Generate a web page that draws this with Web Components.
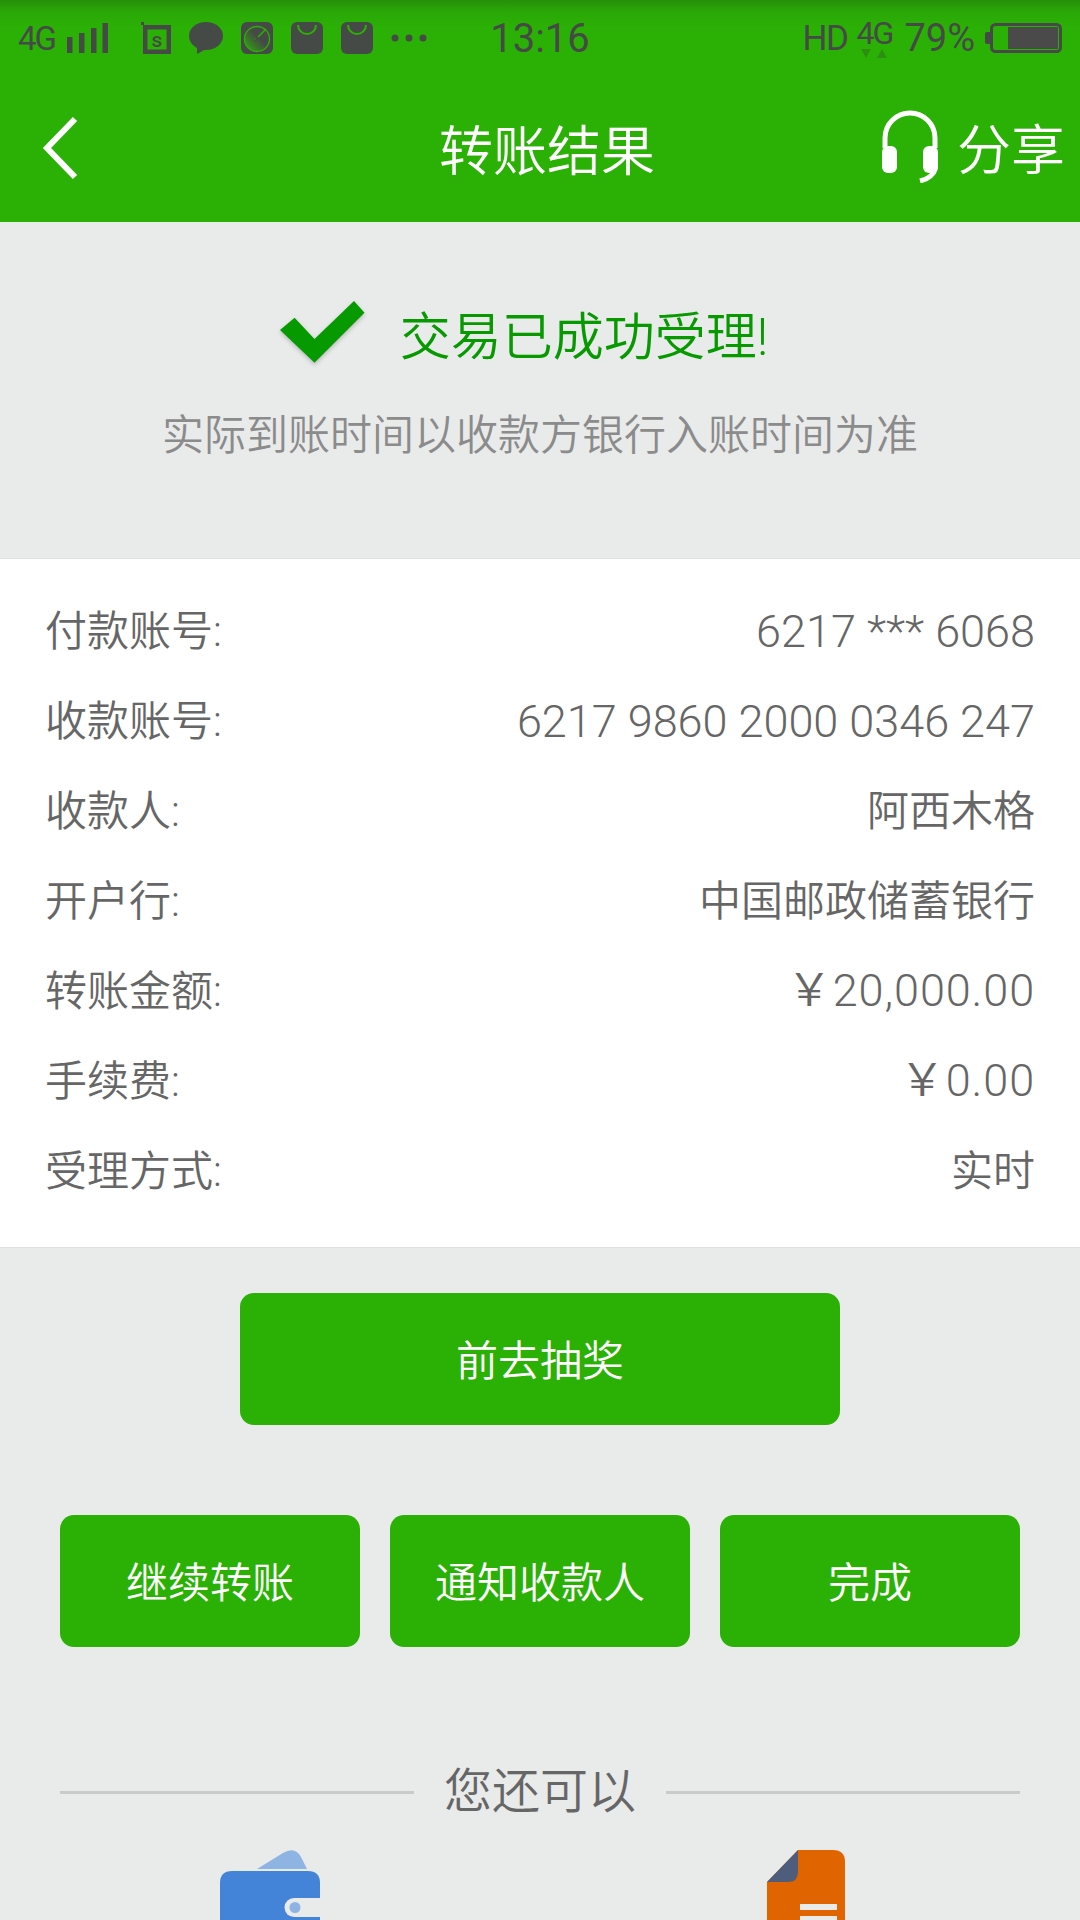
<!DOCTYPE html>
<html lang="zh-CN"><head><meta charset="utf-8"><title>转账结果</title>
<style>
html,body{margin:0;padding:0;background:#e9eaea}
body{font-family:Roboto,"Noto Sans CJK SC",sans-serif;font-weight:350}
pay-app{height:1920px;overflow:hidden}
</style></head><body>
<pay-app>
  <status-bar></status-bar>
  <nav-bar title="转账结果"></nav-bar>
  <result-head heading="交易已成功受理!" note="实际到账时间以收款方银行入账时间为准"></result-head>
  <detail-list>
    <detail-row label="付款账号:" value="6217 *** 6068" kind="num"></detail-row>
    <detail-row label="收款账号:" value="6217 9860 2000 0346 247" kind="num"></detail-row>
    <detail-row label="收款人:" value="阿西木格"></detail-row>
    <detail-row label="开户行:" value="中国邮政储蓄银行"></detail-row>
    <detail-row label="转账金额:" value="￥20,000.00" kind="money"></detail-row>
    <detail-row label="手续费:" value="￥0.00" kind="money"></detail-row>
    <detail-row label="受理方式:" value="实时"></detail-row>
  </detail-list>
  <action-area>
    <green-button style="width:600px">前去抽奖</green-button>
    <div slot="row"><green-button>继续转账</green-button></div>
    <div slot="row"><green-button>通知收款人</green-button></div>
    <div slot="row"><green-button>完成</green-button></div>
  </action-area>
  <more-section></more-section>
</pay-app>
<script>
const def=(name,html,init)=>customElements.define(name,class extends HTMLElement{
  constructor(){super();this.attachShadow({mode:'open'}).innerHTML=html;}
  connectedCallback(){if(init)init(this,this.shadowRoot);}
});
def('pay-app',`<style>:host{display:block;width:1080px;background:#e9eaea;color:#666}</style><slot></slot>`);
def('status-bar',`<style>
:host{display:grid;grid-template-columns:1fr auto 1fr;align-items:center;height:75px;box-sizing:border-box;color:#464a46;
background:linear-gradient(#268f08 0,#2aa807 12px,#2bb105 30px);font-family:Roboto,sans-serif;font-weight:400}
.l,.r{display:flex;align-items:center;height:75px}
.l{padding-left:18px}.r{justify-content:flex-end;padding-right:18px}
svg{display:block;flex:none}
.t{font-size:40px;font-weight:400;line-height:75px;color:#454a45;padding-top:1px;box-sizing:border-box}
.g{font-size:33px;letter-spacing:-2px;line-height:1}
</style>
<div class="l">
<span class="g">4G</span>
<svg style="margin-left:12px" width="41" height="32" viewBox="0 0 41 32" fill="#464a46"><rect x="0" y="15" width="5.5" height="16"/><rect x="12" y="11" width="5.5" height="20"/><rect x="24" y="6" width="5.5" height="25"/><rect x="35.5" y="1" width="5.5" height="30"/></svg>
<svg style="margin-left:33px" width="30" height="33" viewBox="0 0 30 33"><path d="M0 0h3v3h27v29H2V3H0z" fill="#464a46"/><rect x="6.5" y="7.5" width="19" height="20" fill="#2bb105"/><text x="16" y="25" font-family="Roboto" font-size="21" font-weight="500" text-anchor="middle" fill="#464a46">s</text></svg>
<svg style="margin-left:18px" width="34" height="32" viewBox="0 0 34 32"><ellipse cx="17" cy="14" rx="17" ry="14" fill="#464a46"/><path d="M8 25l0 7 9-5z" fill="#464a46"/></svg>
<svg style="margin-left:18px" width="32" height="32" viewBox="0 0 32 32"><defs><linearGradient id="g" x1="0" y1="1" x2="1" y2="0"><stop offset="0" stop-color="#2bb105"/><stop offset=".55" stop-color="#2bb105" stop-opacity="0"/></linearGradient></defs><rect width="32" height="32" rx="6" fill="#464a46"/><circle cx="16" cy="17" r="12.5" fill="url(#g)" stroke="#2bb105" stroke-width="1.3"/><path d="M14 18L25 7" stroke="#2bb105" stroke-width="1.4"/><path d="M13 20l3-6 2 2z" fill="#464a46"/></svg>
<svg style="margin-left:18px" width="32" height="32" viewBox="0 0 32 32"><rect width="32" height="32" rx="6" fill="#464a46"/><path d="M7 3a9 9 0 0 0 18 0" fill="none" stroke="#2bb105" stroke-width="2"/></svg>
<svg style="margin-left:18px" width="32" height="32" viewBox="0 0 32 32"><rect width="32" height="32" rx="6" fill="#464a46"/><path d="M7 3a9 9 0 0 0 18 0" fill="none" stroke="#2bb105" stroke-width="2"/></svg>
<svg style="margin-left:18px" width="36" height="8" viewBox="0 0 36 8" fill="#464a46"><circle cx="4" cy="4" r="3.5"/><circle cx="18" cy="4" r="3.5"/><circle cx="32" cy="4" r="3.5"/></svg>
</div>
<div class="t">13:16</div>
<div class="r">
<span style="font-size:35px;letter-spacing:-1.5px;line-height:1;margin-right:8px">HD</span>
<span style="display:flex;flex-direction:column;align-items:center;width:38px;margin-right:11px;margin-top:-1px">
  <span class="g" style="font-size:32px">4G</span>
  <svg width="26" height="9" viewBox="0 0 26 9" fill="#2d8f12"><path d="M0 0h10L5 9zM16 9h10L21 0z"/></svg>
</span>
<span style="font-size:38px;line-height:1;margin-right:10px">79%</span>
<svg width="77" height="30" viewBox="0 0 77 30"><path d="M5 9H2a2 2 0 0 0-2 2v8a2 2 0 0 0 2 2h3z" fill="#464a46"/><rect x="6.5" y="1.5" width="69" height="27" rx="4" fill="none" stroke="#464a46" stroke-width="3"/><rect x="23" y="4" width="50" height="22" fill="#4a4a4a"/></svg>
</div>`);
def('nav-bar',`<style>
:host{display:grid;grid-template-columns:1fr auto 1fr;align-items:center;height:147px;background:#2bb105;color:#fff}
.b{padding-left:41px}
h1{margin:0;font:inherit;font-size:54px;line-height:139px;padding:8px 0 0 14px}
.r{display:flex;justify-content:flex-end;align-items:center;padding-right:15px;gap:19px;font-size:54px}
.r span{padding-bottom:4px}
svg{display:block}
</style>
<div class="b"><svg style="margin-top:-2px" width="38" height="66" viewBox="0 0 38 66"><path d="M34 4L6 33l28 29" fill="none" stroke="#fff" stroke-width="6"/></svg></div>
<h1></h1>
<div class="r"><svg style="margin-top:-4px" width="56" height="73" viewBox="0 0 56 73"><path d="M3 38V28a25 25 0 0 1 50 0v10" fill="none" stroke="#fff" stroke-width="5"/><rect x="0" y="36" width="15" height="27" rx="6" fill="#fff"/><rect x="41" y="36" width="15" height="27" rx="6" fill="#fff"/><path d="M54 56c-1 8-8 13-16 15" fill="none" stroke="#fff" stroke-width="5"/></svg><span>分享</span></div>`,
(h,s)=>{s.querySelector('h1').textContent=h.getAttribute('title')});
def('result-head',`<style>
:host{display:block;height:336px;box-sizing:border-box;padding-top:78px;background:#e9eaea}
.a{display:flex;align-items:center;justify-content:center;height:64px;padding-right:32px}
svg{display:block;margin-right:35px;filter:drop-shadow(0 2px 2px rgba(0,0,0,.22))}
.h{font-size:51px;color:#069a00;line-height:64px;padding-top:12px}
.n{text-align:center;font-size:42px;color:#8b8b8b;margin-top:42px;line-height:60px}
</style><div class="a"><svg width="85" height="62" viewBox="0 0 85 62"><path d="M0 29L14.600 16.700 34.500 38 74 0 84.500 11.700 34.500 61.700z" fill="#069a00"/></svg><span class="h"></span></div><div class="n"></div>`,
(h,s)=>{s.querySelector('.h').textContent=h.getAttribute('heading');s.querySelector('.n').textContent=h.getAttribute('note')});
def('detail-list',`<style>:host{display:block;height:690px;box-sizing:border-box;padding:27px 45px 0;background:#fff;border-top:1px solid #dfe0e0;border-bottom:1px solid #dfe0e0}</style><slot></slot>`);
def('detail-row',`<style>:host{display:flex;justify-content:space-between;align-items:center;height:90px;font-size:42px;color:#666}
.c{padding-bottom:7px}
.num{font-size:45px;padding-bottom:0}
.money{font-size:45px;letter-spacing:.9px;padding-bottom:9px}
</style><span class="a c"></span><span class="b c"></span>`,
(h,s)=>{s.querySelector('.a').textContent=h.getAttribute('label');const b=s.querySelector('.b');b.textContent=h.getAttribute('value');const k=h.getAttribute('kind');if(k)b.classList.add(k)});
def('green-button',`<style>:host{display:flex;align-items:center;justify-content:center;height:132px;box-sizing:border-box;padding-bottom:4px;background:#2bb105;color:#fff;border-radius:14px;font-size:42px}</style><slot></slot>`);
def('action-area',`<style>:host{display:block;padding-top:45px}
.t{display:flex;justify-content:center}
.r{display:grid;grid-template-columns:repeat(3,300px);gap:30px;justify-content:center;margin-top:90px}
</style><div class="t"><slot></slot></div><div class="r"><slot name="row"></slot></div>`);
def('more-section',`<style>:host{display:block;padding:105px 60px 0}
.d{display:flex;align-items:center;gap:30px;height:70px;font-size:48px;color:#666}
i{flex:1;height:3px;background:#c9cbc9;margin-top:11px}
.ic{display:grid;grid-template-columns:1fr 1fr;margin-top:28px}
svg{display:block}
</style><div class="d"><i></i><span>您还可以</span><i></i></div>
<div class="ic">
<svg style="margin-left:160px" width="100" height="90" viewBox="0 0 100 90"><path d="M37 19L63 3q12-7 18 4l6 12z" fill="#8db4e3"/><path d="M12 21h76q12 0 12 12v57H0V33q0-12 12-12z" fill="#4484d8"/><path d="M100 48H74a9.500 9.500 0 0 0 0 19h26z" fill="#e9eaea"/><circle cx="75" cy="57.500" r="5.500" fill="#8db4e3"/></svg>
<svg style="margin-left:227px" width="78" height="72" viewBox="0 0 78 72"><path d="M31 0h35q12 0 12 12v60H0V32z" fill="#e06400"/><path d="M31 0v22q0 10-10 10H0z" fill="#4f5d7c"/><rect x="33" y="54" width="37" height="6" fill="#e9eaea"/><rect x="33" y="66" width="37" height="6" fill="#e9eaea"/></svg>
</div>`);
</script>
</body></html>
